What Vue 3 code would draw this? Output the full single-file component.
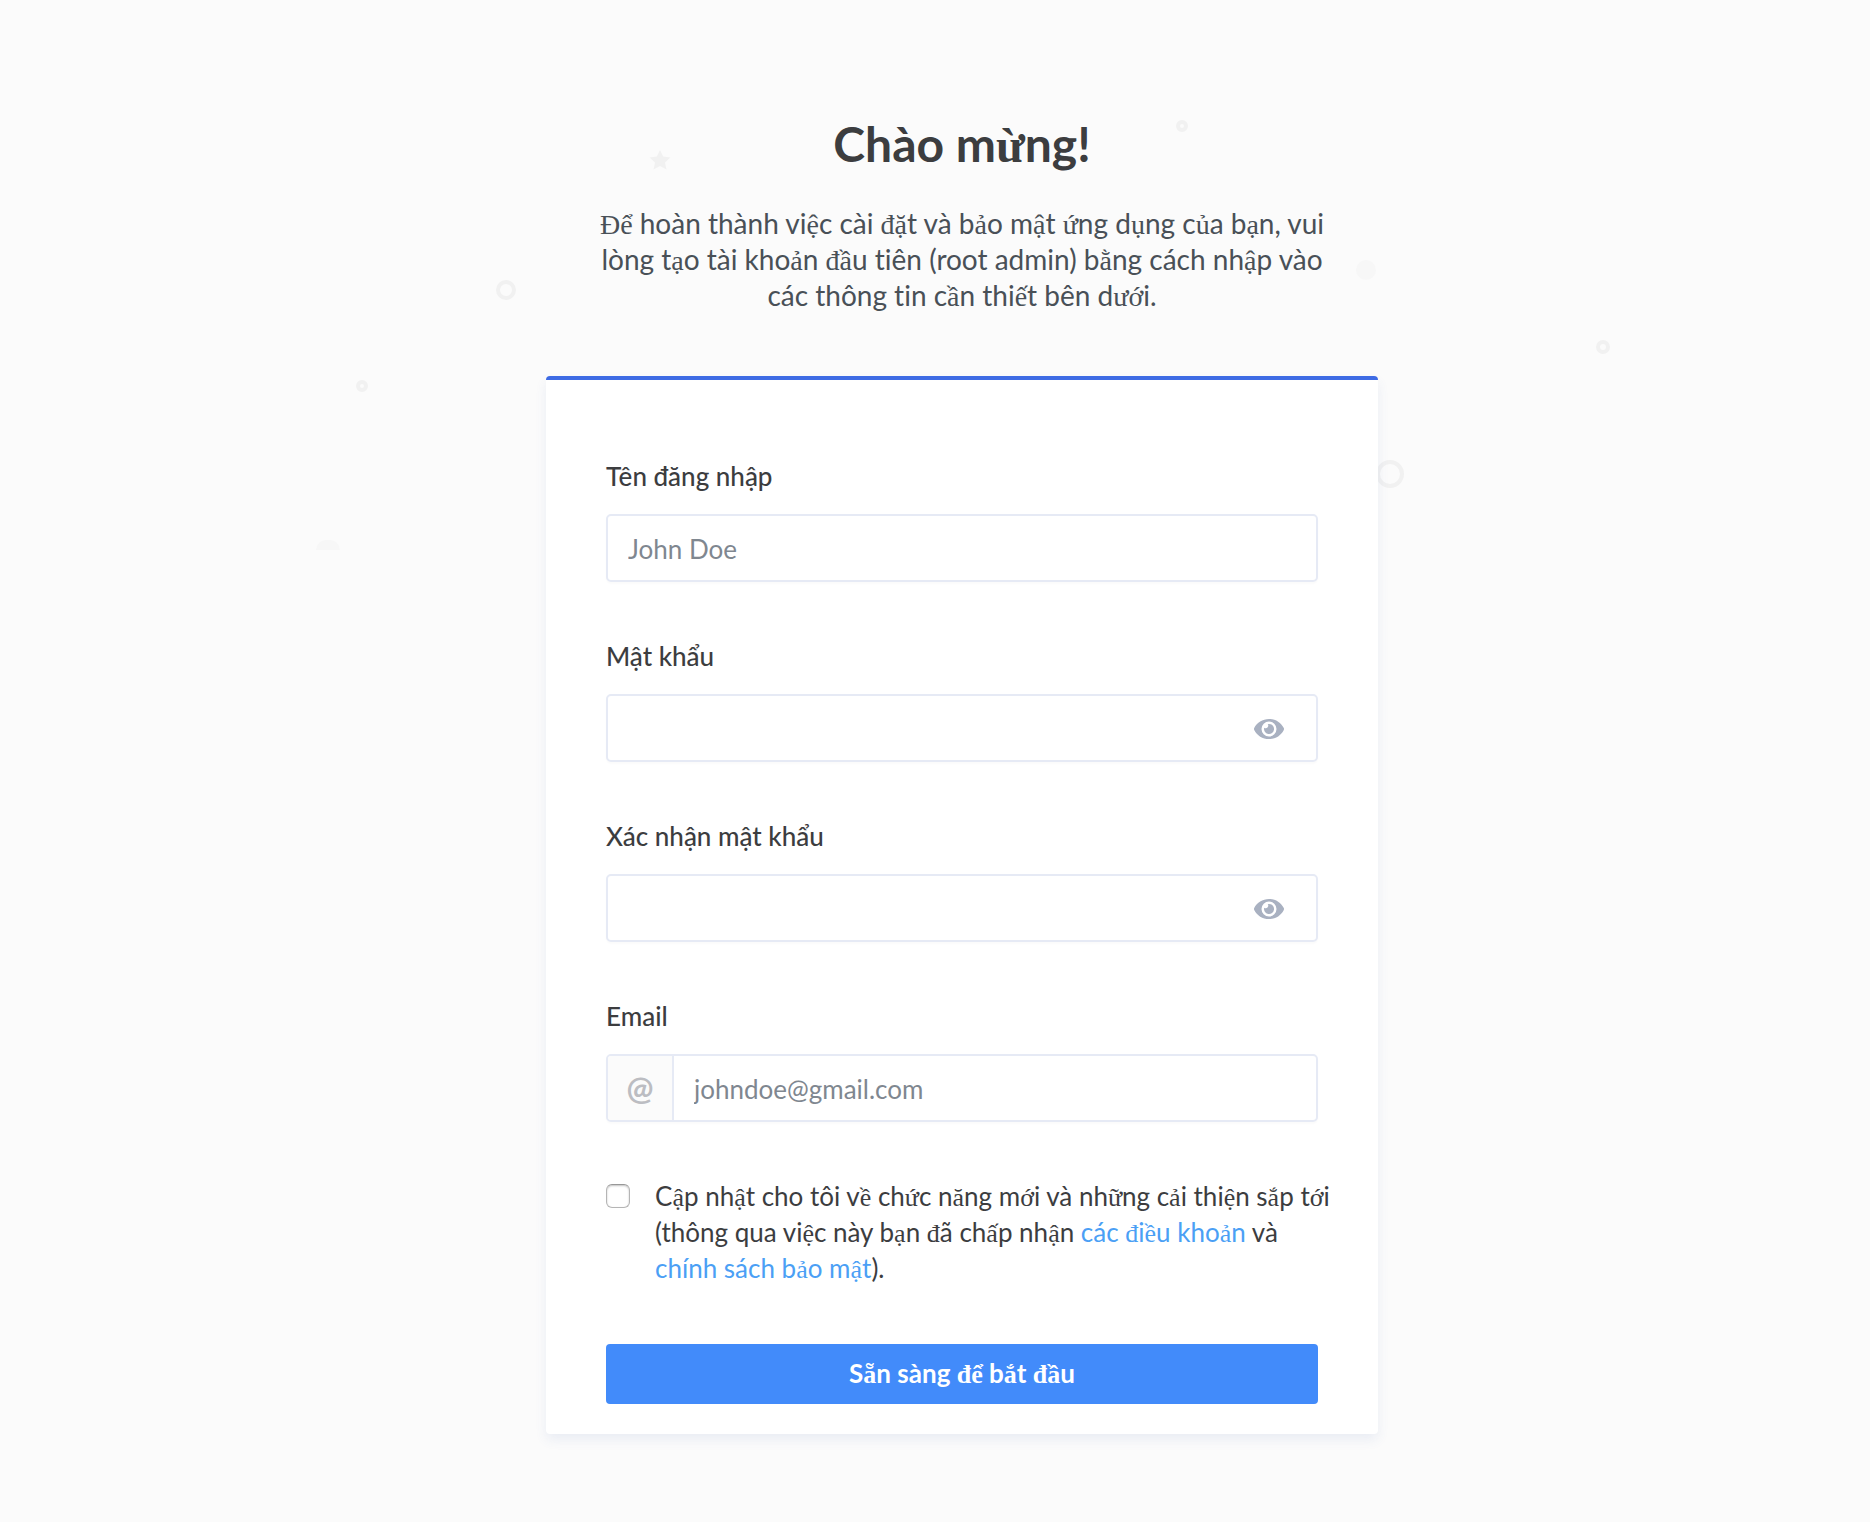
<script setup>
import { reactive } from 'vue'

const form = reactive({ username: '', password: '', confirm: '', email: '', updates: false })
const shown = reactive({ password: false, confirm: false })

const passwords = [
  { key: 'password', label: 'Mật khẩu' },
  { key: 'confirm', label: 'Xác nhận mật khẩu' }
]

// Letters outside Latin-1 are set in the secondary serif face.
function runs(text) {
  return text
    .split(/([^\u0000-\u00ff]+)/)
    .filter(Boolean)
    .map((part) => ({ part, ext: part.charCodeAt(0) > 255 }))
}

const title = runs('Chào mừng!')
const intro = runs(
  'Để hoàn thành việc cài đặt và bảo mật ứng dụng của bạn, vui lòng tạo tài khoản đầu tiên (root admin) bằng cách nhập vào các thông tin cần thiết bên dưới.'
)
const consent = [
  { runs: runs('Cập nhật cho tôi về chức năng mới và những cải thiện sắp tới\n(thông qua việc này bạn đã chấp nhận ') },
  { runs: runs('các điều khoản'), href: '#terms' },
  { runs: runs(' và\n') },
  { runs: runs('chính sách bảo mật'), href: '#privacy' },
  { runs: runs(').') }
]
const submit = runs('Sẵn sàng để bắt đầu')
</script>

<template>
  <main class="page">
    <div class="stage">
      <svg class="shapes" width="1320" height="480" viewBox="0 0 1320 480" aria-hidden="true">
        <g fill="none" stroke="#f1f1f1" stroke-width="4">
          <circle cx="204" cy="200" r="8" />
          <circle cx="60" cy="296" r="4" />
          <circle cx="880" cy="36" r="4" />
          <circle cx="1088" cy="384" r="12" />
          <circle cx="1301" cy="257" r="5" />
        </g>
        <path
          fill="#f1f1f1"
          d="M358 60l3.200 6.600 7.200.8-5.400 5 1.500 7.200-6.500-3.600-6.500 3.600 1.500-7.200-5.400-5 7.200-.8z"
        />
        <circle cx="1064" cy="180" r="10" fill="#f7f7f7" />
        <path d="M14 460a10 10 0 0 1 10-10h4a10 10 0 0 1 10 10z" fill="#f7f7f7" />
      </svg>

      <header class="intro">
        <h1><span v-for="(r, i) in title" :key="i" :class="{ ext: r.ext }">{{ r.part }}</span></h1>
        <p><span v-for="(r, i) in intro" :key="i" :class="{ ext: r.ext }">{{ r.part }}</span></p>
      </header>

      <form class="card" @submit.prevent>
        <div class="field">
          <label for="username">Tên đăng nhập</label>
          <div class="control">
            <input id="username" v-model="form.username" type="text" placeholder="John Doe" />
          </div>
        </div>

        <div v-for="p in passwords" :key="p.key" class="field">
          <label :for="p.key">{{ p.label }}</label>
          <div class="control">
            <input :id="p.key" v-model="form[p.key]" :type="shown[p.key] ? 'text' : 'password'" />
            <button class="eye" type="button" :aria-label="p.label" @click="shown[p.key] = !shown[p.key]">
              <svg width="30" height="20" viewBox="0 0 30 20" aria-hidden="true">
                <path
                  fill="#a9b1c1"
                  fill-rule="evenodd"
                  d="M15 0C8.500 0 3 3.500.2 9.100a2 2 0 0 0 0 1.800C3 16.500 8.500 20 15 20s12-3.500 14.800-9.100a2 2 0 0 0 0-1.800C27 3.500 21.500 0 15 0zm0 17.500a7.500 7.500 0 1 1 0-15 7.500 7.500 0 0 1 0 15z"
                />
                <path fill="#a9b1c1" d="M15 5a5 5 0 0 0-1.300.2 2.500 2.500 0 0 1-3.500 3.500A5 5 0 1 0 15 5z" />
              </svg>
            </button>
          </div>
        </div>

        <div class="field">
          <label for="email">Email</label>
          <div class="control">
            <span class="addon" aria-hidden="true">@</span>
            <input id="email" v-model="form.email" type="email" placeholder="johndoe@gmail.com" />
          </div>
        </div>

        <div class="consent">
          <input id="updates" v-model="form.updates" type="checkbox" />
          <label for="updates"><component :is="c.href ? 'a' : 'span'" v-for="(c, i) in consent" :key="i" :href="c.href"><span v-for="(r, j) in c.runs" :key="j" :class="{ ext: r.ext }">{{ r.part }}</span></component></label>
        </div>

        <button class="submit" type="submit"><span v-for="(r, i) in submit" :key="i" :class="{ ext: r.ext }">{{ r.part }}</span></button>
      </form>
    </div>
  </main>
</template>

<style>
body {
  background: #fbfbfb;
}
</style>

<style scoped>
* {
  box-sizing: border-box;
}

.page {
  padding: 112px 0 88px 54px;
  overflow-x: hidden;
  color: #3c3d3f;
  font-family: Lato, "Liberation Sans", sans-serif;
  font-size: 26px;
  font-variant-ligatures: none;
  line-height: 36px;
}

.stage {
  position: relative;
  max-width: 832px;
  margin: 0 auto;
}

.shapes {
  position: absolute;
  top: -22px;
  left: -244px;
}

.ext {
  font-family: "Liberation Serif", serif;
  line-height: 1;
}

.intro {
  position: relative;
  padding: 0 52px;
  text-align: center;
}

h1 {
  margin: 0 0 29px;
  font-size: 48px;
  font-weight: 700;
  line-height: 64px;
}

.intro p {
  margin: 0 0 63px;
  color: #495057;
  font-size: 28px;
  line-height: 36px;
}

.card {
  position: relative;
  padding: 78px 60px 30px;
  border-top: 4px solid #3e6be4;
  border-radius: 4px;
  background: #fff;
  box-shadow: 0 6px 12px rgba(70, 100, 180, 0.09);
}

.field {
  margin-bottom: 56px;
}

.field label {
  display: block;
  margin-bottom: 20px;
  font-weight: 500;
}

.control {
  display: flex;
  height: 68px;
  overflow: hidden;
  border: 2px solid #e6eaf5;
  border-radius: 5px;
  background: #fff;
  box-shadow: 0 2px 2px rgba(0, 0, 0, 0.02);
}

.control input {
  flex: 1;
  min-width: 0;
  padding: 1px 20px 0;
  border: 0;
  outline: 0;
  background: transparent;
  color: inherit;
  font: inherit;
}

.control input::placeholder {
  color: #7f8790;
  opacity: 1;
}

.addon {
  display: flex;
  align-items: center;
  justify-content: center;
  width: 66px;
  border-right: 2px solid #e6eaf5;
  background: #fbfbfb;
  color: #bcbdc2;
  font-size: 32px;
  font-weight: 700;
}

.eye {
  display: flex;
  align-items: center;
  padding: 2px 32px 0;
  border: 0;
  background: none;
  cursor: pointer;
}

.consent {
  display: flex;
  gap: 25px;
  align-items: flex-start;
  margin-bottom: 58px;
}

.consent input {
  flex: none;
  appearance: none;
  width: 24px;
  height: 24px;
  margin: 6px 0 0;
  border: 1px solid #b5b5b5;
  border-top-color: #989898;
  border-radius: 6px;
  background: #fff;
  box-shadow: inset 0 1px 2px rgba(0, 0, 0, 0.24);
}

.consent input:checked {
  background: #428bfa;
}

.consent label {
  flex: 1;
  margin-right: -24px;
  white-space: pre-line;
}

.consent a {
  color: #4b9ff5;
  text-decoration: none;
}

.submit {
  display: block;
  width: 100%;
  height: 60px;
  padding: 0 20px 2px;
  border: 0;
  border-radius: 4px;
  background: #428bfa;
  color: #fff;
  font: inherit;
  font-weight: 700;
  cursor: pointer;
}
</style>
